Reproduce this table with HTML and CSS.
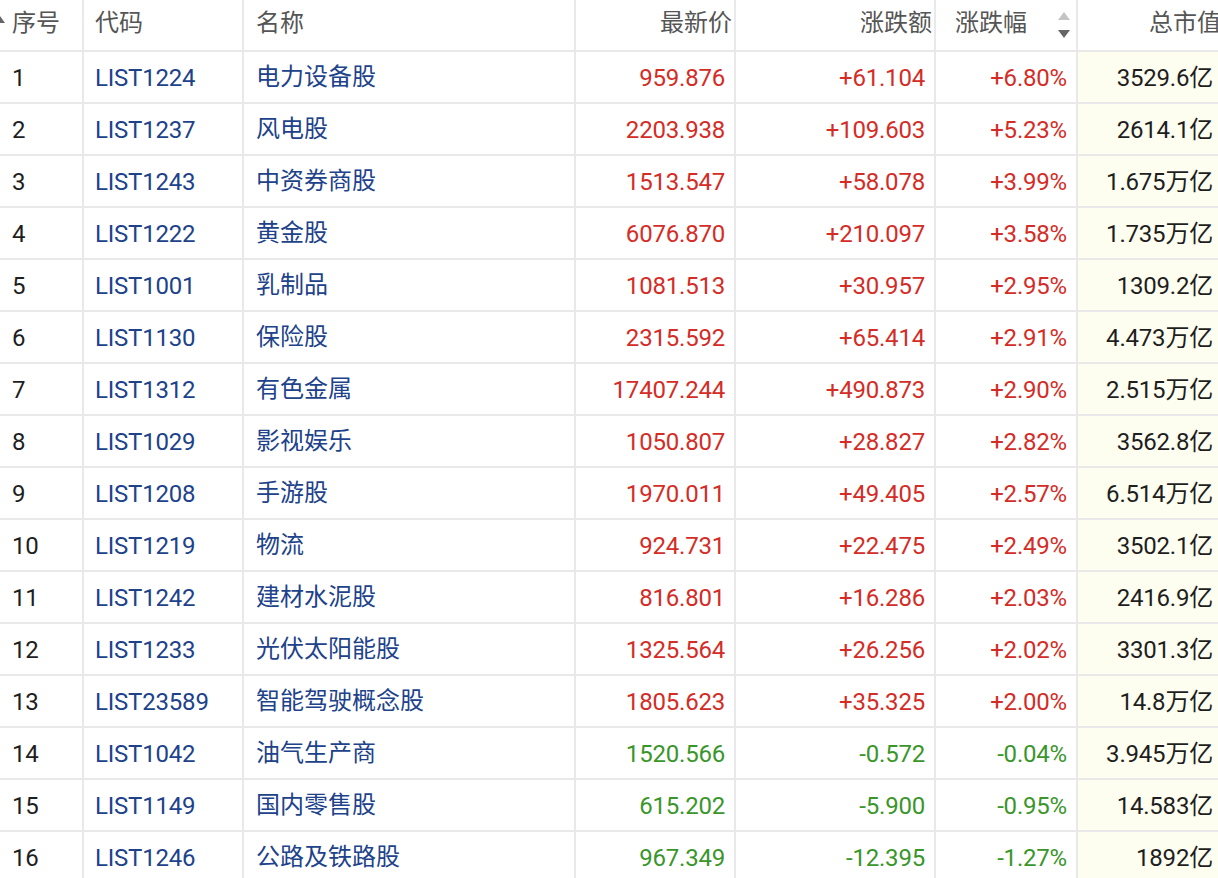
FILE: index.html
```html
<!DOCTYPE html>
<html lang="zh-CN">
<head>
<meta charset="utf-8">
<title>板块行情</title>
<link rel="stylesheet" href="styles.css">
</head>
<body>
<div class="board">
  <div class="row head">
    <div class="cell c-idx"><span class="cut-arrow"></span>序号</div>
    <div class="cell c-code">代码</div>
    <div class="cell c-name">名称</div>
    <div class="cell c-num">最新价</div>
    <div class="cell c-num">涨跌额</div>
    <div class="cell c-num c-sort">涨跌幅<span class="sorter"><i class="up"></i><i class="down"></i></span></div>
    <div class="cell c-num c-cap">总市值</div>
  </div>
  <div class="row"><div class="cell c-idx">1</div><div class="cell c-code">LIST1224</div><div class="cell c-name">电力设备股</div><div class="cell c-num red">959.876</div><div class="cell c-num red">+61.104</div><div class="cell c-num red">+6.80%</div><div class="cell c-num c-cap">3529.6亿</div></div>
  <div class="row"><div class="cell c-idx">2</div><div class="cell c-code">LIST1237</div><div class="cell c-name">风电股</div><div class="cell c-num red">2203.938</div><div class="cell c-num red">+109.603</div><div class="cell c-num red">+5.23%</div><div class="cell c-num c-cap">2614.1亿</div></div>
  <div class="row"><div class="cell c-idx">3</div><div class="cell c-code">LIST1243</div><div class="cell c-name">中资券商股</div><div class="cell c-num red">1513.547</div><div class="cell c-num red">+58.078</div><div class="cell c-num red">+3.99%</div><div class="cell c-num c-cap">1.675万亿</div></div>
  <div class="row"><div class="cell c-idx">4</div><div class="cell c-code">LIST1222</div><div class="cell c-name">黄金股</div><div class="cell c-num red">6076.870</div><div class="cell c-num red">+210.097</div><div class="cell c-num red">+3.58%</div><div class="cell c-num c-cap">1.735万亿</div></div>
  <div class="row"><div class="cell c-idx">5</div><div class="cell c-code">LIST1001</div><div class="cell c-name">乳制品</div><div class="cell c-num red">1081.513</div><div class="cell c-num red">+30.957</div><div class="cell c-num red">+2.95%</div><div class="cell c-num c-cap">1309.2亿</div></div>
  <div class="row"><div class="cell c-idx">6</div><div class="cell c-code">LIST1130</div><div class="cell c-name">保险股</div><div class="cell c-num red">2315.592</div><div class="cell c-num red">+65.414</div><div class="cell c-num red">+2.91%</div><div class="cell c-num c-cap">4.473万亿</div></div>
  <div class="row"><div class="cell c-idx">7</div><div class="cell c-code">LIST1312</div><div class="cell c-name">有色金属</div><div class="cell c-num red">17407.244</div><div class="cell c-num red">+490.873</div><div class="cell c-num red">+2.90%</div><div class="cell c-num c-cap">2.515万亿</div></div>
  <div class="row"><div class="cell c-idx">8</div><div class="cell c-code">LIST1029</div><div class="cell c-name">影视娱乐</div><div class="cell c-num red">1050.807</div><div class="cell c-num red">+28.827</div><div class="cell c-num red">+2.82%</div><div class="cell c-num c-cap">3562.8亿</div></div>
  <div class="row"><div class="cell c-idx">9</div><div class="cell c-code">LIST1208</div><div class="cell c-name">手游股</div><div class="cell c-num red">1970.011</div><div class="cell c-num red">+49.405</div><div class="cell c-num red">+2.57%</div><div class="cell c-num c-cap">6.514万亿</div></div>
  <div class="row"><div class="cell c-idx">10</div><div class="cell c-code">LIST1219</div><div class="cell c-name">物流</div><div class="cell c-num red">924.731</div><div class="cell c-num red">+22.475</div><div class="cell c-num red">+2.49%</div><div class="cell c-num c-cap">3502.1亿</div></div>
  <div class="row"><div class="cell c-idx">11</div><div class="cell c-code">LIST1242</div><div class="cell c-name">建材水泥股</div><div class="cell c-num red">816.801</div><div class="cell c-num red">+16.286</div><div class="cell c-num red">+2.03%</div><div class="cell c-num c-cap">2416.9亿</div></div>
  <div class="row"><div class="cell c-idx">12</div><div class="cell c-code">LIST1233</div><div class="cell c-name">光伏太阳能股</div><div class="cell c-num red">1325.564</div><div class="cell c-num red">+26.256</div><div class="cell c-num red">+2.02%</div><div class="cell c-num c-cap">3301.3亿</div></div>
  <div class="row"><div class="cell c-idx">13</div><div class="cell c-code">LIST23589</div><div class="cell c-name">智能驾驶概念股</div><div class="cell c-num red">1805.623</div><div class="cell c-num red">+35.325</div><div class="cell c-num red">+2.00%</div><div class="cell c-num c-cap">14.8万亿</div></div>
  <div class="row"><div class="cell c-idx">14</div><div class="cell c-code">LIST1042</div><div class="cell c-name">油气生产商</div><div class="cell c-num green">1520.566</div><div class="cell c-num green">-0.572</div><div class="cell c-num green">-0.04%</div><div class="cell c-num c-cap">3.945万亿</div></div>
  <div class="row"><div class="cell c-idx">15</div><div class="cell c-code">LIST1149</div><div class="cell c-name">国内零售股</div><div class="cell c-num green">615.202</div><div class="cell c-num green">-5.900</div><div class="cell c-num green">-0.95%</div><div class="cell c-num c-cap">14.583亿</div></div>
  <div class="row"><div class="cell c-idx">16</div><div class="cell c-code">LIST1246</div><div class="cell c-name">公路及铁路股</div><div class="cell c-num green">967.349</div><div class="cell c-num green">-12.395</div><div class="cell c-num green">-1.27%</div><div class="cell c-num c-cap">1892亿</div></div>
</div>
</body>
</html>
```

FILE: styles.css
```css
html, body {
  margin: 0;
  padding: 0;
  background: #ffffff;
  overflow: hidden;
}

body {
  width: 1218px;
  height: 878px;
  font-family: Roboto, "Noto Sans CJK SC", sans-serif;
  font-size: 24px;
  line-height: 1;
  color: #222222;
}

.board {
  width: 1228px;
}

.row {
  display: grid;
  grid-template-columns: 84px 160px 332px 160px 200px 142px 150px;
  height: 52px;
}

.cell {
  box-sizing: border-box;
  height: 52px;
  border-right: 2px solid #e9e9e9;
  border-bottom: 2px solid #e9e9e9;
  display: flex;
  align-items: center;
  white-space: nowrap;
  overflow: hidden;
  padding: 2px 9px 0 12px;
  letter-spacing: -0.2px;
}

.row .c-name {
  letter-spacing: 0;
  padding-top: 0;
}

.head .cell {
  color: #555555;
  padding-top: 0;
  padding-bottom: 5px;
  padding-right: 2px;
  letter-spacing: 0;
  position: relative;
}

.c-idx {
  color: #1e1e1e;
}

.c-code {
  color: #20428a;
  padding-left: 11px;
}

.c-name {
  color: #20428a;
}

.c-num {
  justify-content: flex-end;
}

.red {
  color: #d42c26;
}

.green {
  color: #3a962a;
}

.row .c-cap {
  background: #fdfdf0;
  color: #1e1e1e;
  padding-right: 13px;
}

.head .c-cap {
  background: #ffffff;
  color: #555555;
  padding-right: 5px;
}

.head .c-sort {
  padding-right: 6px;
}

.sorter {
  display: flex;
  flex-direction: column;
  gap: 10px;
  margin-left: 31px;
  margin-top: 4px;
}

.sorter i {
  display: block;
  width: 0;
  height: 0;
  border-left: 6px solid transparent;
  border-right: 6px solid transparent;
}

.sorter .up {
  border-bottom: 8px solid #c4c4c4;
}

.sorter .down {
  border-top: 8px solid #666666;
}

.cut-arrow {
  position: absolute;
  left: -5px;
  top: 16px;
  width: 0;
  height: 0;
  border-left: 5px solid transparent;
  border-right: 5px solid transparent;
  border-bottom: 7px solid #666666;
}
```
